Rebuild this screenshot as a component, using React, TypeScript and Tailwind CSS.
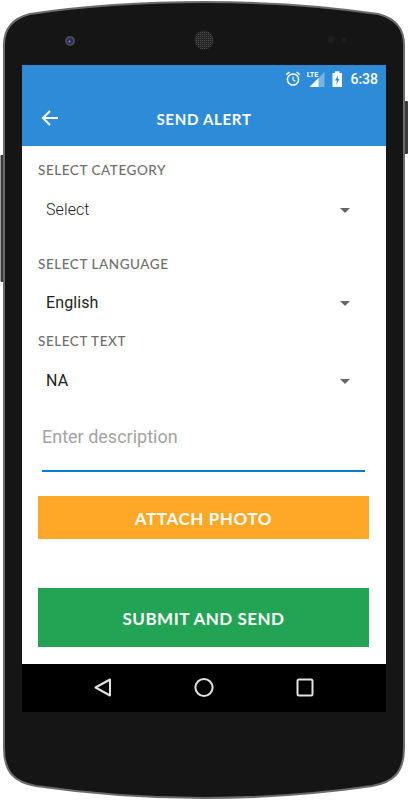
import React from "react";

function Shell() {
  return (
    <svg className="absolute left-0 top-0" width="408" height="800" viewBox="0 0 408 800" fill="none">
      <defs>
        <pattern id="grille" width="2" height="2" patternUnits="userSpaceOnUse">
          <rect width="2" height="2" fill="#262626" />
          <rect width="1" height="1" fill="#4c4c4c" />
        </pattern>
      </defs>
      <rect x="0.5" y="155" width="6" height="127" rx="1" fill="#3a3a3a" />
      <rect x="401" y="101" width="7" height="53" rx="1" fill="#3a3a3a" />
      <path d="M4 45C4 28 14 18 30 14C90 5 150 2 204 2C258 2 318 5 378 14C394 18 404 28 404 45V748C404 772 394 782 372 786C310 795 250 798 204 798C158 798 98 795 36 786C14 782 4 772 4 748Z" fill="#151515" stroke="#6b6b6b" strokeWidth="2" />
      <circle cx="70" cy="41" r="5" fill="#4a4a4a" />
      <circle cx="70" cy="41" r="3" fill="#2a2a6a" />
      <circle cx="69.5" cy="41.5" r="1" fill="#8f8fd0" />
      <circle cx="204" cy="40" r="9.5" fill="url(#grille)" />
      <circle cx="331" cy="39.5" r="3.5" fill="#1f1f1f" />
      <circle cx="344" cy="39.5" r="2" fill="#1f1f1f" />
    </svg>
  );
}

function StatusIcons() {
  return (
    <svg width="58" height="18" viewBox="0 0 58 18" fill="none">
      <circle cx="8" cy="9.5" r="5.6" stroke="white" strokeWidth="1.5" />
      <path d="M8 6.5V9.8L10.4 11.2" stroke="white" strokeWidth="1.1" />
      <path d="M1.3 4.6L4.3 2M14.7 4.6L11.7 2" stroke="white" strokeWidth="1.5" />
      <path d="M39.5 2V17H24.5Z" fill="white" fillOpacity="0.35" />
      <path d="M33.5 8V17H24.5Z" fill="white" />
      <rect x="47.5" y="3" width="9.5" height="14" fill="white" />
      <rect x="50" y="1.3" width="4.5" height="2" fill="white" />
      <path d="M53.2 5L50 10.5H52L51 15L54.6 8.8H52.5Z" fill="#2e8bd8" />
    </svg>
  );
}

function Arrow() {
  return (
    <svg width="18" height="18" viewBox="0 0 18 18" fill="none" stroke="white" strokeWidth="2">
      <path d="M17 9H2M9 2L2 9L9 16" />
    </svg>
  );
}

function Label({ text, cls }: { text: string; cls: string }) {
  return (
    <div className={`h-5 text-[13.5px] leading-5 font-medium tracking-[0.55px] text-[#6f6f6f] font-['Lato',sans-serif] ${cls}`}>
      {text}
    </div>
  );
}

function Select({ text, cls }: { text: string; cls: string }) {
  return (
    <div className={`h-12 flex items-center justify-between pl-2 pr-[19px] text-base tracking-[0.1px] text-[#222222] font-['Roboto',sans-serif] ${cls}`}>
      <span>{text}</span>
      <span className="w-0 h-0 border-x-[5px] border-x-transparent border-t-[5px] border-t-[#666666]" />
    </div>
  );
}

export default function App() {
  return (
    <div className="relative w-[408px] h-[800px] bg-white overflow-hidden pt-[65px] pl-[22px]">
      <Shell />
      <div className="relative w-[364px] h-[647px] flex flex-col bg-white">
        <div className="h-[81px] shrink-0 bg-[#2e8bd8] flex flex-col">
          <div className="h-[19px] mt-1 mb-2 flex items-center justify-end pr-2 gap-[7px] relative">
            <StatusIcons />
            <span className="absolute left-[284px] top-[1px] text-[8px] leading-[9px] font-bold text-white font-['Roboto',sans-serif] scale-x-90">LTE</span>
            <span className="text-sm font-medium text-white font-['Roboto',sans-serif]">6:38</span>
          </div>
          <div className="flex-1 relative flex items-center justify-center pb-1">
            <span className="absolute left-[19px] top-[13px]"><Arrow /></span>
            <span className="text-[15px] font-bold tracking-[0.7px] text-white font-['Lato',sans-serif]">SEND ALERT</span>
          </div>
        </div>
        <div className="flex-1 flex flex-col pl-4 pr-[17px]">
          <Label text="SELECT CATEGORY" cls="mt-[14px]" />
          <Select text="Select" cls="mt-[6px] font-light" />
          <Label text="SELECT LANGUAGE" cls="mt-5" />
          <Select text="English" cls="mt-[5px]" />
          <Label text="SELECT TEXT" cls="mt-1" />
          <Select text="NA" cls="mt-[6px]" />
          <div className="mt-[11px] mx-1 h-14 border-b-2 border-[#0a7bd0] pt-[7px] text-lg leading-7 text-[#a3a3a3] font-['Roboto',sans-serif]">
            Enter description
          </div>
          <div className="mt-6 h-[43px] pt-[2px] bg-[#ffa726] flex items-center justify-center text-[17px] font-bold tracking-[0.6px] text-white font-['Lato',sans-serif]">
            ATTACH PHOTO
          </div>
          <div className="mt-[49px] h-[59px] pt-[2px] bg-[#23a455] flex items-center justify-center text-[17px] font-bold tracking-[0.5px] text-white font-['Lato',sans-serif]">
            SUBMIT AND SEND
          </div>
        </div>
        <div className="h-12 shrink-0 bg-black flex items-center justify-center">
          <svg width="364" height="48" viewBox="0 0 364 48" fill="none" stroke="#e2e2e2" strokeWidth="2">
            <path d="M88 15.5V31.5L73.5 23.5Z" strokeLinejoin="round" />
            <circle cx="182" cy="23.5" r="8.6" />
            <rect x="275.5" y="15.5" width="15" height="16" rx="1.5" />
          </svg>
        </div>
      </div>
    </div>
  );
}
